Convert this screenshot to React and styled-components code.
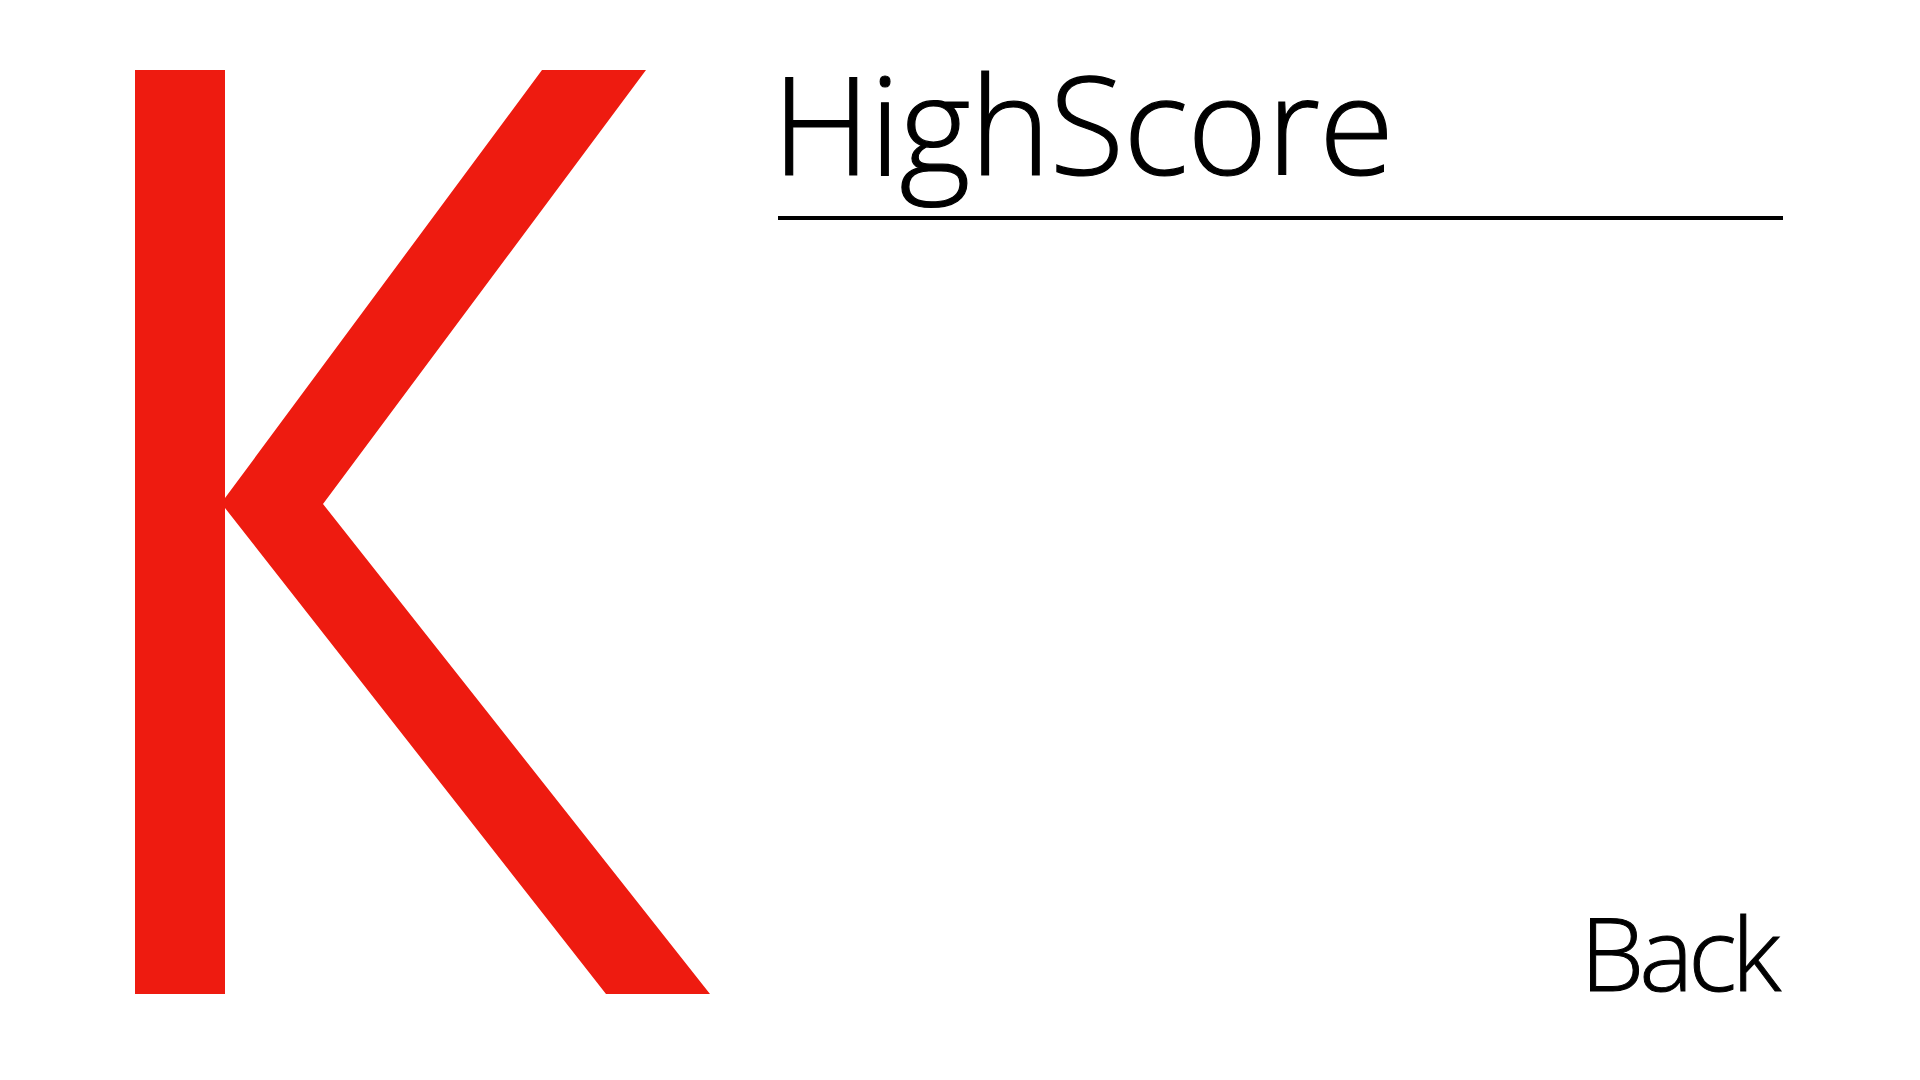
import React from 'react';
import styled, { createGlobalStyle } from 'styled-components';

const GlobalStyle = createGlobalStyle`
  html, body {
    margin: 0;
    padding: 0;
    background: #ffffff;
  }
  body {
    font-family: "Open Sans", "Liberation Sans", sans-serif;
    color: #000000;
  }
`;

const Screen = styled.main`
  width: 1920px;
  height: 1080px;
  box-sizing: border-box;
  padding: 70px 137px 86px 135px;
  display: flex;
  gap: 67px;
  overflow: hidden;
`;

const LogoWrapper = styled.div`
  flex: 0 0 576px;
  height: 924px;
  svg {
    display: block;
    width: 100%;
    height: 100%;
  }
`;

const Panel = styled.section`
  flex: 1;
  display: flex;
  flex-direction: column;
  justify-content: space-between;
`;

const Title = styled.h1`
  margin: 0;
  padding: 0 0 42px 0;
  border-bottom: 4px solid #000000;
  font-size: 137px;
  font-weight: 300;
  line-height: 104px;
  letter-spacing: -1px;
  text-indent: -6px;
  -webkit-text-stroke: 1.2px #000000;
`;

const BackButton = styled.button`
  align-self: flex-end;
  margin: 0 7px 0 0;
  padding: 0;
  border: none;
  background: none;
  cursor: pointer;
  font-family: inherit;
  color: inherit;
  font-size: ${(p) => p.size}px;
  font-weight: 300;
  line-height: 85px;
  letter-spacing: -5px;
  -webkit-text-stroke: 1px #000000;
`;

const KLogo = () => (
  <svg viewBox="0 0 576 924" aria-label="K logo">
    <rect x="0" y="0" width="90" height="924" fill="#ee1b10" />
    <polygon
      points="407,0 511,0 188,434 575,924 471,924 90,438 90,428"
      fill="#ee1b10"
    />
  </svg>
);

const App = () => (
  <>
    <GlobalStyle />
    <Screen>
      <LogoWrapper>
        <KLogo />
      </LogoWrapper>
      <Panel>
        <Title>HighScore</Title>
        <BackButton size={102}>Back</BackButton>
      </Panel>
    </Screen>
  </>
);

export default App;
